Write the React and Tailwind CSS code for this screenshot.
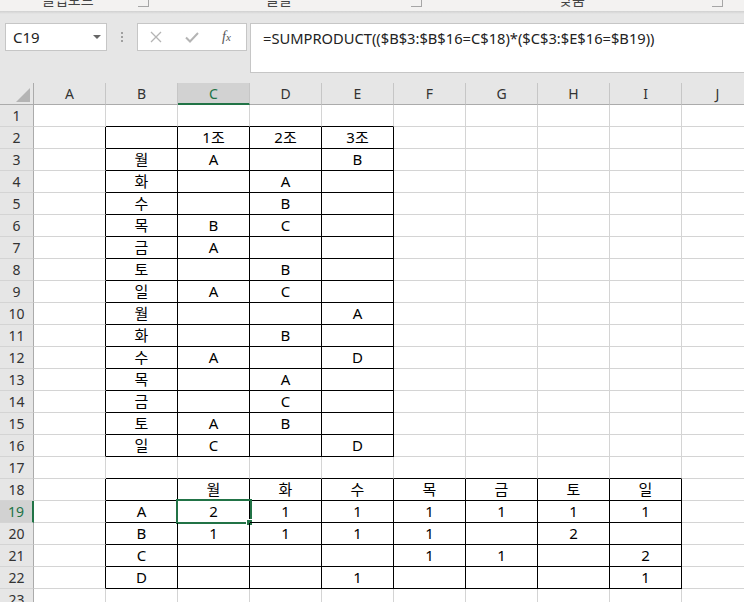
import React from 'react';

const cols = ['A', 'B', 'C', 'D', 'E', 'F', 'G', 'H', 'I', 'J'];

const t1 = [
  ['', '1조', '2조', '3조'],
  ['월', 'A', '', 'B'],
  ['화', '', 'A', ''],
  ['수', '', 'B', ''],
  ['목', 'B', 'C', ''],
  ['금', 'A', '', ''],
  ['토', '', 'B', ''],
  ['일', 'A', 'C', ''],
  ['월', '', '', 'A'],
  ['화', '', 'B', ''],
  ['수', 'A', '', 'D'],
  ['목', '', 'A', ''],
  ['금', '', 'C', ''],
  ['토', 'A', 'B', ''],
  ['일', 'C', '', 'D'],
];

const t2 = [
  ['', '월', '화', '수', '목', '금', '토', '일'],
  ['A', '2', '1', '1', '1', '1', '1', '1'],
  ['B', '1', '1', '1', '1', '', '2', ''],
  ['C', '', '', '', '1', '1', '', '2'],
  ['D', '', '', '1', '', '', '', '1'],
];

const inTable = (r, c) =>
  (r >= 2 && r <= 16 && c >= 1 && c <= 4) || (r >= 18 && r <= 22 && c >= 1 && c <= 8);

const valueAt = (r, c) => {
  if (r >= 2 && r <= 16 && c >= 1 && c <= 4) return t1[r - 2][c - 1];
  if (r >= 18 && r <= 22 && c >= 1 && c <= 8) return t2[r - 18][c - 1];
  return '';
};

const font = "font-['Noto_Sans','Noto_Sans_CJK_KR',sans-serif]";

function Cell({ r, c }) {
  const right = inTable(r, c) || inTable(r, c + 1);
  const bottom = inTable(r, c) || inTable(r + 1, c);
  const selected = r === 19 && c === 2;
  return (
    <div
      className={`relative w-[72px] h-[22px] shrink-0 border-r border-b flex items-center justify-center text-[15px] text-black ${
        right ? 'border-r-black' : 'border-r-[#d4d4d4]'
      } ${bottom ? 'border-b-black' : 'border-b-[#d4d4d4]'}`}
    >
      <span className="leading-none">{valueAt(r, c)}</span>
      {selected && (
        <>
          <div className="absolute -left-[2px] -top-[2px] w-[76px] h-[25px] border-2 border-[#217346]" />
          <div className="absolute -right-[4px] -bottom-[4px] w-[7px] h-[7px] bg-[#217346] border border-white" />
        </>
      )}
    </div>
  );
}

function Row({ r }) {
  const sel = r === 19;
  return (
    <div className="flex">
      <div
        className={`w-[34px] h-[22px] shrink-0 border-b border-b-[#d4d4d4] flex items-center justify-center text-[14px] ${
          sel
            ? 'bg-[#d2d2d2] border-r-2 border-r-[#217346] text-[#217346]'
            : 'bg-[#e6e6e6] border-r border-r-[#ababab] text-[#333]'
        }`}
      >
        {r}
      </div>
      {cols.map((_, c) => (
        <Cell key={c} r={r} c={c} />
      ))}
    </div>
  );
}

export default function App() {
  const rows = Array.from({ length: 23 }, (_, i) => i + 1);
  return (
    <div className={`w-[744px] h-[602px] overflow-hidden bg-white ${font}`}>
      {/* ribbon group labels, clipped at the top like the screenshot */}
      <div className="h-[11px] bg-[#f3f2f1] overflow-hidden flex text-[14px] text-[#444]">
        <span className="ml-[42px] w-[96px] -mt-[10px] leading-[20px]">클립보드</span>
        <span className="w-[11px] h-[7px] border-r border-b border-[#a6a6a6]" />
        <span className="ml-[117px] w-[145px] -mt-[10px] leading-[20px]">글꼴</span>
        <span className="w-[11px] h-[7px] border-r border-b border-[#a6a6a6]" />
        <span className="ml-[137px] w-[153px] -mt-[10px] leading-[20px]">맞춤</span>
        <span className="w-[11px] h-[7px] border-r border-b border-[#a6a6a6]" />
      </div>
      <div className="h-[3px] bg-gradient-to-b from-[#d0d0d0] to-[#e6e6e6]" />

      {/* formula bar */}
      <div className="h-[69px] bg-[#e6e6e6] flex items-start pt-[9px]">
        <div className="ml-[5px] w-[102px] h-[28px] bg-white border border-[#c6c6c6] flex items-center pl-[7px] pr-[5px]">
          <span className="text-[15px] text-[#222] flex-1">C19</span>
          <svg width="8" height="5" viewBox="0 0 8 5">
            <path d="M0 0 L8 0 L4 4 Z" fill="#666" />
          </svg>
        </div>
        <div className="w-[30px] h-[28px] flex flex-col items-center justify-center gap-[2px]">
          <span className="w-[2px] h-[2px] bg-[#a0a0a0]" />
          <span className="w-[2px] h-[2px] bg-[#a0a0a0]" />
          <span className="w-[2px] h-[2px] bg-[#a0a0a0]" />
        </div>
        <div className="w-[110px] h-[28px] bg-white border border-[#c6c6c6] flex items-center">
          <svg className="ml-[12px]" width="12" height="12" viewBox="0 0 12 12">
            <path d="M1 1 L11 11 M11 1 L1 11" stroke="#b4b4b4" strokeWidth="1.3" />
          </svg>
          <svg className="ml-[23px]" width="14" height="11" viewBox="0 0 14 11">
            <path d="M1 5.5 L5 9.5 L13 1" stroke="#b4b4b4" strokeWidth="2" fill="none" />
          </svg>
          <span className="ml-[23px] text-[14px] italic text-[#555] font-['Liberation_Serif',serif] leading-none">
            f<span className="text-[11px]">x</span>
          </span>
        </div>
        <div className="ml-[3px] flex-1 h-[50px] bg-white border border-[#c6c6c6] border-r-0 pl-[12px] pt-[3px] text-[14.7px] text-[#222] leading-[22px]">
          =SUMPRODUCT(($B$3:$B$16=C$18)*($C$3:$E$16=$B19))
        </div>
      </div>

      {/* column headers */}
      <div className="flex h-[22px]">
        <div className="w-[34px] h-[22px] shrink-0 bg-[#e6e6e6] border-r border-b border-[#ababab] flex items-end justify-end pr-[3px] pb-[2px]">
          <svg width="14" height="14" viewBox="0 0 14 14">
            <path d="M14 0 L14 14 L0 14 Z" fill="#b4b4b4" />
          </svg>
        </div>
        {cols.map((c) => (
          <div
            key={c}
            className={`w-[72px] h-[22px] shrink-0 border-r border-r-[#c6c6c6] flex items-center justify-center text-[14px] ${
              c === 'C'
                ? 'bg-[#d2d2d2] border-b-2 border-b-[#217346] text-[#217346]'
                : 'bg-[#e6e6e6] border-b border-b-[#ababab] text-[#333]'
            }`}
          >
            {c}
          </div>
        ))}
      </div>

      {rows.map((r) => (
        <Row key={r} r={r} />
      ))}
    </div>
  );
}
